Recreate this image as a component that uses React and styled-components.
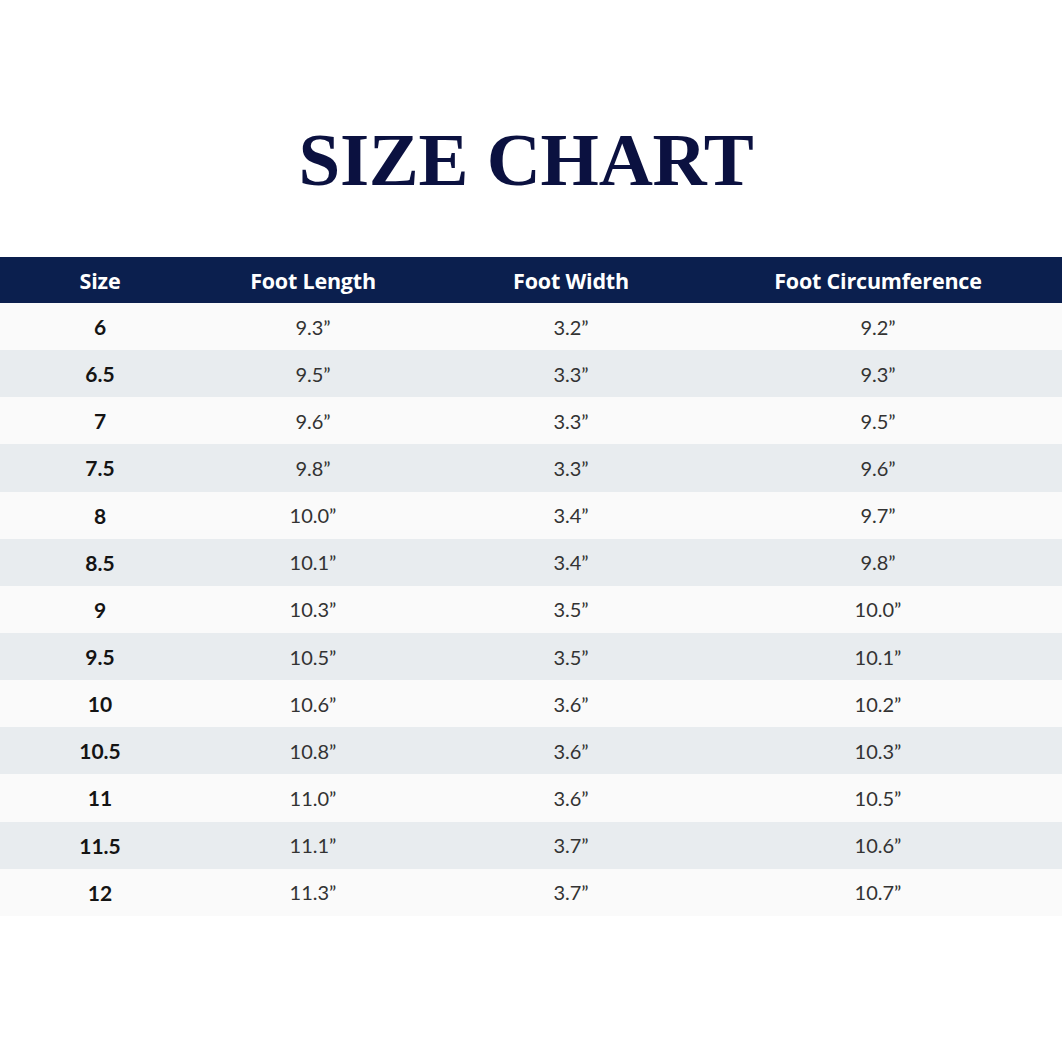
import React from 'react';
import styled, { createGlobalStyle } from 'styled-components';

const ROWS = [
    ['6', '9.3”', '3.2”', '9.2”'],
    ['6.5', '9.5”', '3.3”', '9.3”'],
    ['7', '9.6”', '3.3”', '9.5”'],
    ['7.5', '9.8”', '3.3”', '9.6”'],
    ['8', '10.0”', '3.4”', '9.7”'],
    ['8.5', '10.1”', '3.4”', '9.8”'],
    ['9', '10.3”', '3.5”', '10.0”'],
    ['9.5', '10.5”', '3.5”', '10.1”'],
    ['10', '10.6”', '3.6”', '10.2”'],
    ['10.5', '10.8”', '3.6”', '10.3”'],
    ['11', '11.0”', '3.6”', '10.5”'],
    ['11.5', '11.1”', '3.7”', '10.6”'],
    ['12', '11.3”', '3.7”', '10.7”'],
];

const HEADINGS = ['Size', 'Foot Length', 'Foot Width', 'Foot Circumference'];

const App = () => {
    return (
        <>
            <GlobalStyle />
            <Page>
                <Title>SIZE CHART</Title>
                <Table>
                    <HeaderRow>
                        {HEADINGS.map((h) => (
                            <HeaderCell key={h}>{h}</HeaderCell>
                        ))}
                    </HeaderRow>
                    {ROWS.map((row, i) => (
                        <Row key={row[0]} shaded={i % 2 === 1}>
                            <SizeCell>{row[0]}</SizeCell>
                            <Cell>{row[1]}</Cell>
                            <Cell>{row[2]}</Cell>
                            <Cell>{row[3]}</Cell>
                        </Row>
                    ))}
                </Table>
            </Page>
        </>
    );
};

const GlobalStyle = createGlobalStyle`
    html, body {
        margin: 0;
        padding: 0;
        background: #ffffff;
    }
`;

const Page = styled.div`
    width: 1064px;
    height: 1064px;
    display: flex;
    flex-direction: column;
    align-items: center;
    padding-top: 112px;
    box-sizing: border-box;
    font-family: Lato, "Open Sans", sans-serif;
`;

const Title = styled.h1`
    margin: 0 12px 0 0;
    font-family: "Liberation Serif", serif;
    font-weight: 700;
    font-size: 75px;
    line-height: 96px;
    letter-spacing: -0.3px;
    color: #0b1140;
`;

const Table = styled.div`
    align-self: stretch;
    margin-top: 49px;
    margin-right: 2px;
    display: flex;
    flex-direction: column;
`;

const columns = `
    display: grid;
    grid-template-columns: 200px 226px 290px 324px;
    align-items: center;
`;

const HeaderRow = styled.div`
    ${columns}
    height: 46px;
    background-color: #0b1f4e;
`;

const HeaderCell = styled.div`
    text-align: center;
    color: #ffffff;
    font-family: "Open Sans", Lato, sans-serif;
    font-weight: 700;
    font-size: 21.5px;
    letter-spacing: -0.2px;
`;

const Row = styled.div`
    ${columns}
    height: 47.15px;
    background-color: ${(p) => (p.shaded ? '#e8ecef' : '#fafafa')};
`;

const Cell = styled.div`
    text-align: center;
    color: #333333;
    font-size: 20px;
`;

const SizeCell = styled(Cell)`
    color: #141414;
    font-weight: 700;
    font-size: 21px;
`;

export default App;
